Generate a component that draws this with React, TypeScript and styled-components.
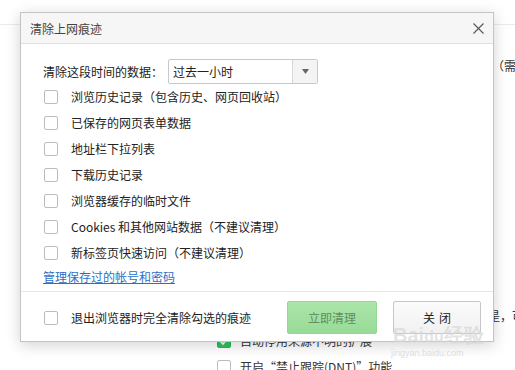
import styled, { createGlobalStyle } from "styled-components";

const GlobalStyle = createGlobalStyle`
  html, body {
    margin: 0;
    padding: 0;
    background: #ffffff;
  }
  body {
    font-family: "Noto Sans CJK SC", "Noto Sans", sans-serif;
    font-size: 12px;
    color: #222;
  }
`;

const options = [
  "浏览历史记录（包含历史、网页回收站）",
  "已保存的网页表单数据",
  "地址栏下拉列表",
  "下载历史记录",
  "浏览器缓存的临时文件",
  "Cookies 和其他网站数据（不建议清理）",
  "新标签页快速访问（不建议清理）",
];

const CloseIcon = () => (
  <svg width="11" height="11" viewBox="0 0 11 11">
    <path d="M0.5 0.5 L10.5 10.5 M10.5 0.5 L0.5 10.5" stroke="#555" strokeWidth="1.1" fill="none" />
  </svg>
);

const App = () => {
  return (
    <>
      <GlobalStyle />
      <Screen>
        <BgPage>
          <BgSection>
            <BgRow $top={33}>
              <BgBox />
              <BgText>开启云安全防护，自动检测下载文件与网页安全（需要联网）</BgText>
            </BgRow>
            <BgNote $top={234}>开启后，在浏览网页时将自动拦截广告与弹窗等是，可以在设置中修改</BgNote>
            <BgRow $top={9}>
              <BgBox $checked>
                <svg width="10" height="8" viewBox="0 0 10 8">
                  <path d="M1 4 L4 7 L9 1" stroke="#fff" strokeWidth="1.6" fill="none" />
                </svg>
              </BgBox>
              <BgText>自动停用来源不明的扩展</BgText>
            </BgRow>
            <BgRow $top={10}>
              <BgBox />
              <BgText>开启“禁止跟踪(DNT)”功能</BgText>
            </BgRow>
          </BgSection>
        </BgPage>

        <Dialog>
          <Header>
            <Title>清除上网痕迹</Title>
            <CloseButton>
              <CloseIcon />
            </CloseButton>
          </Header>
          <Body>
            <RangeRow>
              <Label>清除这段时间的数据：</Label>
              <Select>
                <SelectValue>过去一小时</SelectValue>
                <SelectArrow>
                  <svg width="7" height="5" viewBox="0 0 7 5">
                    <path d="M0 0 L7 0 L3.5 5 Z" fill="#666" />
                  </svg>
                </SelectArrow>
              </Select>
            </RangeRow>
            {options.map((text) => (
              <OptionRow key={text}>
                <CheckBox />
                <OptionText>{text}</OptionText>
              </OptionRow>
            ))}
            <ManageLink href="#">管理保存过的帐号和密码</ManageLink>
          </Body>
          <Footer>
            <OptionRow $flat>
              <CheckBox />
              <OptionText>退出浏览器时完全清除勾选的痕迹</OptionText>
            </OptionRow>
            <Buttons>
              <Button $primary>立即清理</Button>
              <Button $spaced>关闭</Button>
            </Buttons>
          </Footer>
        </Dialog>

        <Watermark>
          <WatermarkLogo>Bai<span>du</span>经验</WatermarkLogo>
          <WatermarkUrl>jingyan.baidu.com</WatermarkUrl>
        </Watermark>
      </Screen>
    </>
  );
};

const Screen = styled.div`
  position: relative;
  width: 515px;
  height: 370px;
  overflow: hidden;
  background: #fff;
`;

const BgPage = styled.div`
  padding-top: 24px;
`;

const BgSection = styled.div`
  border-top: 1px solid #ebebeb;
  padding-left: 217px;
`;

const BgRow = styled.div<{ $top: number }>`
  display: flex;
  align-items: center;
  height: 16px;
  margin-top: ${(p) => p.$top}px;
  white-space: nowrap;
`;

const BgBox = styled.span<{ $checked?: boolean }>`
  box-sizing: border-box;
  width: 14px;
  height: 14px;
  border-radius: 2px;
  border: 1px solid ${(p) => (p.$checked ? "#27b85a" : "#bdbdbd")};
  background: ${(p) => (p.$checked ? "#2fc262" : "#fff")};
  display: flex;
  align-items: center;
  justify-content: center;
  flex: none;
`;

const BgText = styled.span`
  margin-left: 9px;
  font-size: 12px;
  line-height: 16px;
  color: #333;
`;

const BgNote = styled.div<{ $top: number }>`
  margin-top: ${(p) => p.$top}px;
  padding-left: 19px;
  height: 16px;
  line-height: 16px;
  white-space: nowrap;
  color: #333;
`;

const Dialog = styled.div`
  position: absolute;
  left: 20px;
  top: 12px;
  width: 474px;
  height: 330px;
  box-sizing: border-box;
  border: 1px solid #c4c4c4;
  background: #fff;
  box-shadow: 0 3px 14px rgba(0, 0, 0, 0.18);
  display: flex;
  flex-direction: column;
`;

const Header = styled.div`
  height: 30px;
  background: #f6f6f6;
  border-bottom: 1px solid #e0e0e0;
  display: flex;
  align-items: center;
  justify-content: space-between;
  padding: 0 9px 0 9px;
`;

const Title = styled.span`
  font-size: 12px;
  color: #444;
`;

const CloseButton = styled.span`
  display: flex;
  align-items: center;
  padding-top: 1px;
`;

const Body = styled.div`
  padding: 15px 22px 6px 22px;
  display: flex;
  flex-direction: column;
`;

const RangeRow = styled.div`
  display: flex;
  align-items: center;
  height: 25px;
`;

const Label = styled.span`
  color: #222;
  line-height: 16px;
  width: 125px;
`;

const Select = styled.div`
  box-sizing: border-box;
  width: 150px;
  height: 25px;
  border: 1px solid #c8c8c8;
  border-radius: 2px;
  display: flex;
  background: #fff;
`;

const SelectValue = styled.span`
  flex: 1;
  padding-left: 4px;
  display: flex;
  align-items: center;
  color: #222;
`;

const SelectArrow = styled.span`
  width: 24px;
  border-left: 1px solid #d8d8d8;
  background: #f4f4f4;
  display: flex;
  align-items: center;
  justify-content: center;
`;

const OptionRow = styled.div<{ $flat?: boolean }>`
  display: flex;
  align-items: center;
  height: ${(p) => (p.$flat ? "auto" : "26px")};
  padding-left: 1px;
`;

const CheckBox = styled.span`
  box-sizing: border-box;
  width: 14px;
  height: 14px;
  border: 1px solid #bcbcbc;
  border-radius: 2px;
  background: #fff;
  flex: none;
`;

const OptionText = styled.span`
  margin-left: 13px;
  line-height: 16px;
  color: #222;
  white-space: nowrap;
`;

const ManageLink = styled.a`
  margin-top: 3px;
  line-height: 16px;
  color: #2d6fc8;
  text-decoration: underline;
  align-self: flex-start;
`;

const Footer = styled.div`
  flex: 1;
  border-top: 1px solid #e6e6e6;
  display: flex;
  align-items: center;
  justify-content: space-between;
  padding: 2px 12px 0 22px;
`;

const Buttons = styled.div`
  display: flex;
  gap: 16px;
`;

const Button = styled.button<{ $primary?: boolean; $spaced?: boolean }>`
  box-sizing: border-box;
  width: ${(p) => (p.$primary ? "90px" : "88px")};
  height: 33px;
  border-radius: 2px;
  font-family: inherit;
  font-size: 12px;
  letter-spacing: ${(p) => (p.$spaced ? "4px" : "0")};
  text-indent: ${(p) => (p.$spaced ? "4px" : "0")};
  border: 1px solid ${(p) => (p.$primary ? "#95d895" : "#c6c6c6")};
  background: ${(p) =>
    p.$primary
      ? "linear-gradient(#abe5a9, #97db97)"
      : "linear-gradient(#fbfbfb, #f1f1f1)"};
  color: ${(p) => (p.$primary ? "#5f8f5f" : "#222")};
  padding: 0;
`;

const Watermark = styled.div`
  position: absolute;
  left: 393px;
  top: 324px;
  display: flex;
  flex-direction: column;
  align-items: flex-start;
  pointer-events: none;
`;

const WatermarkLogo = styled.div`
  font-family: "Liberation Sans", sans-serif;
  font-size: 20px;
  font-weight: bold;
  line-height: 22px;
  color: rgba(215, 215, 215, 0.7);
  span {
    font-size: 16px;
  }
`;

const WatermarkUrl = styled.div`
  font-family: "Liberation Sans", sans-serif;
  font-size: 9px;
  color: rgba(200, 200, 200, 0.6);
  margin-left: -2px;
`;

export default App;
